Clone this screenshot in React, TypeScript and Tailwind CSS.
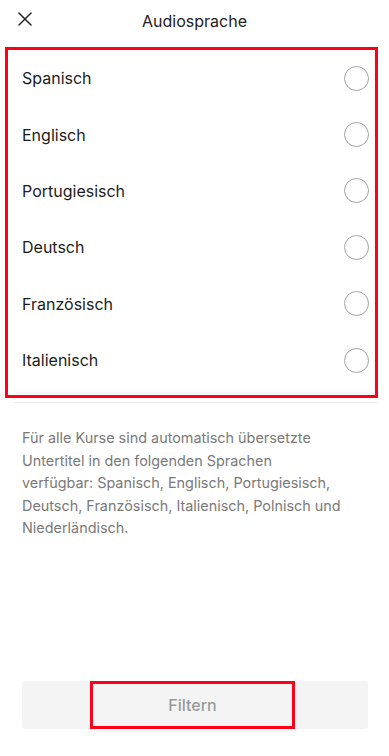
import { X } from 'lucide-react';

const languages = ['Spanisch', 'Englisch', 'Portugiesisch', 'Deutsch', 'Französisch', 'Italienisch'];

export default function App() {
  return (
    <div
      className="flex h-[756px] w-[389px] flex-col bg-white text-[#1c1c1c]"
      style={{ fontFamily: 'Inter, "Noto Sans", sans-serif' }}
    >
      <header className="relative flex h-[47px] items-center justify-center pb-[6px]">
        <button className="absolute left-[13px] top-[7px] text-[#222]">
          <X className="h-[24px] w-[24px]" strokeWidth={1.5} />
        </button>
        <h1 className="text-[16px] leading-none text-[#222]">Audiosprache</h1>
      </header>

      <div className="ml-[5px] w-[373px] border-[3px] border-[#ff0018] pb-[7px]">
        {languages.map((lang) => (
          <div key={lang} className="flex h-[56.4px] items-center justify-between pl-[14px] pr-[6px]">
            <span className="text-[16px]">{lang}</span>
            <span className="h-[25px] w-[25px] rounded-full border-[1.5px] border-[#a3a3a3]" />
          </div>
        ))}
      </div>

      <div className="ml-[13px] mt-[4px] h-px w-[365px] bg-[#ededed]" />

      <p className="ml-[22px] mt-[24px] w-[345px] text-[14.4px] leading-[22.5px] text-[#7a7a7a]">
        Für alle Kurse sind automatisch übersetzte
        <br />
        Untertitel in den folgenden Sprachen
        <br />
        verfügbar: Spanisch, Englisch, Portugiesisch,
        <br />
        Deutsch, Französisch, Italienisch, Polnisch und
        <br />
        Niederländisch.
      </p>

      <div className="mt-auto px-[22px] pb-[27px]">
        <div className="flex h-[48px] w-[346px] rounded-[3px] bg-[#f4f4f4] pl-[68px]">
          <button className="flex w-[205px] items-center justify-center border-[3px] border-[#ff0018] text-[16px] font-medium text-[#9a9a9a]">
            Filtern
          </button>
        </div>
      </div>
    </div>
  );
}
